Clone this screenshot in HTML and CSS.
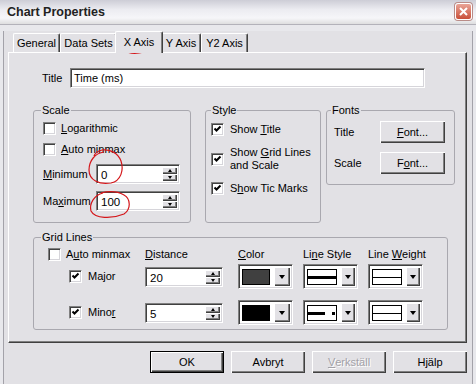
FILE: index.html
```html
<!DOCTYPE html>
<html lang="en">
<head>
  <meta charset="UTF-8">
  <meta name="viewport" content="width=device-width, initial-scale=1">
  <title>Chart Properties</title>
  <link rel="stylesheet" href="styles.css">
</head>
<body>
  <div class="window">
    <div class="titlebar">
      <span class="caption">Chart Properties</span>
      <span class="close">
        <svg width="9" height="9" viewBox="0 0 9 9"><path d="M1 1 L8 8 M8 1 L1 8" stroke="#fff" stroke-width="2"/></svg>
      </span>
    </div>
    <div class="frame">
      <div class="client">
        <div class="tabs">
          <span class="tab tab-general">General</span>
          <span class="tab tab-data">Data Sets</span>
          <span class="tab tab-x active">X Axis</span>
          <span class="tab tab-y">Y Axis</span>
          <span class="tab tab-y2">Y2 Axis</span>
        </div>

        <div class="panel">
          <div class="title-row">
            <span class="title-label">Title</span>
            <div class="field title-field">Time (ms)</div>
          </div>

          <div class="groups">
            <fieldset class="group scale">
              <legend>Scale</legend>
              <div class="check-row first"><span class="check"></span><span><u>L</u>ogarithmic</span></div>
              <div class="check-row"><span class="check"></span><span><u>A</u>uto minmax</span></div>
              <div class="spin-row">
                <span class="spin-label"><u>M</u>inimum</span>
                <div class="field spin">
                  <span class="value">0</span>
                  <span class="spinner"><span class="arrow up"></span><span class="arrow down"></span></span>
                </div>
              </div>
              <div class="spin-row second">
                <span class="spin-label">Ma<u>x</u>imum</span>
                <div class="field spin">
                  <span class="value">100</span>
                  <span class="spinner"><span class="arrow up"></span><span class="arrow down"></span></span>
                </div>
              </div>
            </fieldset>

            <fieldset class="group style">
              <legend>Style</legend>
              <div class="check-row first"><span class="check"><svg width="11" height="11" viewBox="0 0 11 11"><path d="M2.5 4.5 L4.5 6.5 L8.5 2.5" stroke="#000" stroke-width="2" fill="none"/></svg></span><span>Show <u>T</u>itle</span></div>
              <div class="check-row"><span class="check"><svg width="11" height="11" viewBox="0 0 11 11"><path d="M2.5 4.5 L4.5 6.5 L8.5 2.5" stroke="#000" stroke-width="2" fill="none"/></svg></span><span>Show <u>G</u>rid Lines<br>and Scale</span></div>
              <div class="check-row"><span class="check"><svg width="11" height="11" viewBox="0 0 11 11"><path d="M2.5 4.5 L4.5 6.5 L8.5 2.5" stroke="#000" stroke-width="2" fill="none"/></svg></span><span>S<u>h</u>ow Tic Marks</span></div>
            </fieldset>

            <fieldset class="group fonts">
              <legend>Fonts</legend>
              <div class="font-row first"><span class="font-label">Title</span><span class="btn font-btn"><u>F</u>ont...</span></div>
              <div class="font-row"><span class="font-label">Scale</span><span class="btn font-btn">F<u>o</u>nt...</span></div>
            </fieldset>
          </div>

          <fieldset class="group grid-lines">
            <legend>Grid Lines</legend>
            <div class="grid-row head">
              <div class="check-row"><span class="check"></span><span>A<u>u</u>to minmax</span></div>
              <span class="col-label"><u>D</u>istance</span>
              <span class="col-label"><u>C</u>olor</span>
              <span class="col-label">Li<u>n</u>e Style</span>
              <span class="col-label">Line <u>W</u>eight</span>
            </div>
            <div class="grid-row data-row">
              <div class="check-row indent"><span class="check"><svg width="11" height="11" viewBox="0 0 11 11"><path d="M2.5 4.5 L4.5 6.5 L8.5 2.5" stroke="#000" stroke-width="2" fill="none"/></svg></span><span>Major</span></div>
              <div class="field spin distance">
                <span class="value">20</span>
                <span class="spinner"><span class="arrow up"></span><span class="arrow down"></span></span>
              </div>
              <div class="field combo"><span class="combo-value swatch-grey"></span><span class="combo-btn"><span class="arrow down big"></span></span></div>
              <div class="field combo"><span class="combo-value"><span class="stroke thick"></span></span><span class="combo-btn"><span class="arrow down big"></span></span></div>
              <div class="field combo"><span class="combo-value"><span class="stroke thin"></span></span><span class="combo-btn"><span class="arrow down big"></span></span></div>
            </div>
            <div class="grid-row data-row minor">
              <div class="check-row indent"><span class="check"><svg width="11" height="11" viewBox="0 0 11 11"><path d="M2.5 4.5 L4.5 6.5 L8.5 2.5" stroke="#000" stroke-width="2" fill="none"/></svg></span><span>Mino<u>r</u></span></div>
              <div class="field spin distance">
                <span class="value">5</span>
                <span class="spinner"><span class="arrow up"></span><span class="arrow down"></span></span>
              </div>
              <div class="field combo"><span class="combo-value swatch-black"></span><span class="combo-btn"><span class="arrow down big"></span></span></div>
              <div class="field combo"><span class="combo-value"><svg width="28" height="3" viewBox="0 0 28 3"><rect x="0" y="0" width="17" height="3" fill="#000"/><rect x="24" y="0" width="3" height="3" fill="#000"/></svg></span><span class="combo-btn"><span class="arrow down big"></span></span></div>
              <div class="field combo"><span class="combo-value"><span class="stroke thin"></span></span><span class="combo-btn"><span class="arrow down big"></span></span></div>
            </div>
          </fieldset>
        </div>

        <div class="buttons">
          <span class="btn dialog-btn default">OK</span>
          <span class="btn dialog-btn">Avbryt</span>
          <span class="btn dialog-btn disabled"><u>V</u>erkställ</span>
          <span class="btn dialog-btn">Hjälp</span>
        </div>
      </div>
    </div>

    <!-- red pen marks drawn on top of the screenshot -->
    <svg class="marks" width="476" height="384" viewBox="0 0 476 384">
      <path d="M158 36 C146 30 127 32 121 40 C117 47 126 55 139 53 C150 51 159 46 160 39" />
      <path d="M157 39 L159 41" stroke-width="2.5"/>
      <path d="M104 152 C95 153 89 161 89 170 C89 180 99 185 111 183 C121 181 124 170 121 161 C118 153 110 149 102 150 C98 151 95 153 94 156" />
      <path d="M103 193 C94 195 89 204 91 211 C95 219 112 219 124 214 C131 209 131 199 124 195 C117 191 109 191 101 193" />
    </svg>
  </div>
</body>
</html>
```

FILE: styles.css
```css
* { margin: 0; padding: 0; box-sizing: border-box; }
body {
  font-family: "Liberation Sans", Arial, sans-serif;
  font-size: 11px;
  color: #000;
  background: #e2e1e5;
}
u { text-underline-offset: 1px; }

.window {
  position: relative;
  width: 476px;
  height: 384px;
  display: flex;
  flex-direction: column;
  background: #e8e8ec;
  overflow: hidden;
}

/* title bar */
.titlebar {
  height: 25px;
  display: flex;
  align-items: center;
  padding: 0 4px 1px 7px;
  background: linear-gradient(#cdcdd6, #ececf1 40%, #f6f6f9 75%, #dededf);
  border-bottom: 1px solid #b3b2ba;
}
.caption {
  flex: 1;
  font-weight: bold;
  font-size: 12.5px;
  color: #222;
}
.close {
  width: 17px;
  height: 17px;
  display: flex;
  align-items: center;
  justify-content: center;
  border: 1px solid #fff;
  border-radius: 3px;
  background: linear-gradient(#e9a497, #c9503a);
  box-shadow: 0 0 0 1px #b98c88;
}

/* client area */
.frame {
  flex: 1;
  padding: 0 3px 3px;
}
.client {
  height: 100%;
  background: #e2e1e5;
  border: 1px solid #a3a2a9;
  border-top: 0;
}

.tabs {
  display: flex;
  align-items: flex-end;
  height: 21px;
  margin: 6px 0 0 9px;
}
.tab {
  height: 19px;
  display: flex;
  align-items: center;
  justify-content: center;
  border-top: 1px solid #fff;
  border-left: 1px solid #fff;
  border-right: 1px solid #404040;
  border-radius: 2px 2px 0 0;
  box-shadow: inset -1px 0 #808080;
}
.tab-general { width: 47px; }
.tab-data { width: 57px; }
.tab-x { width: 44px; }
.tab-y { width: 40px; }
.tab-y2 { width: 47px; }
.tab.active {
  position: relative;
  z-index: 1;
  width: 48px;
  height: 22px;
  margin: 0 -2px -1px;
  padding-bottom: 2px;
  background: #e2e1e5;
}

.panel {
  height: 291px;
  margin: 0 5px 0 4px;
  padding-left: 24px;
  border: 1px solid;
  border-color: #fff #404040 #404040 #fff;
  box-shadow: inset -1px -1px #808080;
}

/* shared widgets */
.field {
  background: #fff;
  border: 1px solid;
  border-color: #808080 #fff #fff #808080;
  box-shadow: inset 1px 1px #404040, inset -1px -1px #d6d5da;
}
.btn, .combo-btn, .spinner .arrow {
  background: #e2e1e5;
  box-shadow: inset 1px 1px #fff, inset -1px -1px #404040, inset -2px -2px #808080;
}
.btn {
  display: flex;
  align-items: center;
  justify-content: center;
}
.check {
  width: 13px;
  height: 13px;
  flex: none;
  background: #fff;
  border: 1px solid;
  border-color: #808080 #fff #fff #808080;
  box-shadow: inset 1px 1px #404040, inset -1px -1px #d6d5da;
}
.check svg { display: block; }
.check-row {
  display: flex;
  align-items: center;
  gap: 5px;
  line-height: 13px;
  white-space: nowrap;
}

.title-row {
  display: flex;
  align-items: center;
  margin-top: 15px;
  padding-left: 9px;
}
.title-label { width: 28px; }
.title-field {
  width: 355px;
  height: 20px;
  padding: 0 3px;
  line-height: 18px;
}

/* group boxes */
.groups {
  display: flex;
  align-items: flex-start;
  margin-top: 16px;
}
.group {
  border: 1px solid #a9a8af;
  border-radius: 3px;
  min-width: 0;
}
.group legend {
  padding: 0 1px;
  margin-left: -2px;
  line-height: 13px;
}

.scale { width: 158px; height: 119px; padding: 0 9px; }
.scale .check-row { margin-top: 8px; }
.scale .check-row.first { margin-top: 5px; }
.spin-row {
  display: flex;
  align-items: center;
  margin-top: 8px;
}
.spin-row.second { margin-top: 7px; }
.spin-label { width: 53px; }
.spin {
  display: flex;
  width: 84px;
  height: 20px;
  padding: 2px;
}
.spin .value {
  flex: 1;
  padding-left: 2px;
  line-height: 16px;
  font-size: 11.5px;
}
.spinner {
  width: 15px;
  display: flex;
  flex-direction: column;
}
.arrow {
  display: flex;
  align-items: center;
  justify-content: center;
}
.spinner .arrow { flex: 1; }
.arrow::after {
  content: "";
  display: block;
  width: 0;
  height: 0;
  border-left: 2.5px solid transparent;
  border-right: 2.5px solid transparent;
}
.arrow.up::after { border-bottom: 3px solid #000; }
.arrow.down::after { border-top: 3px solid #000; }
.arrow.big::after {
  border-left-width: 3.5px;
  border-right-width: 3.5px;
  border-top-width: 4px;
}

.style { width: 116px; height: 119px; margin-left: 14px; padding: 0 5px; }
.style legend { margin-left: 0; }
.style .check-row { gap: 6px; margin-top: 10px; }
.style .check-row.first { margin-top: 6px; }

.fonts { width: 129px; height: 81px; margin-left: 5px; padding: 0 7px; }
.fonts legend { margin-left: -3px; }
.font-row {
  display: flex;
  align-items: center;
  margin-top: 9px;
}
.font-row.first { margin-top: 4px; }
.font-label { width: 46px; }
.font-btn { width: 65px; height: 22px; }

.grid-lines {
  width: 415px;
  height: 99px;
  margin-top: 8px;
  padding-left: 14px;
}
.grid-lines legend { margin-left: -7px; }
.grid-row {
  display: grid;
  grid-template-columns: 97px 93px 65px 65px 55px;
  align-items: center;
}
.grid-row.head { height: 20px; }
.col-label { white-space: nowrap; }
.data-row { height: 25px; }
.data-row.minor { margin-top: 11px; }
.check-row.indent { margin-left: 21px; gap: 6px; }
.distance { width: 78px; }

.combo {
  display: flex;
  width: 55px;
  height: 25px;
  padding: 2px;
}
.combo-value {
  flex: 1;
  margin: 2px 4px 1px 1px;
  border: 1px solid #000;
  display: flex;
  align-items: center;
  justify-content: center;
}
.swatch-grey { background: #404040; }
.swatch-black { background: #000; }
.stroke { display: block; width: 28px; background: #000; }
.stroke.thick { height: 3px; }
.stroke.thin { height: 1px; }
.combo-btn {
  width: 16px;
  display: flex;
  align-items: center;
  justify-content: center;
}

/* dialog buttons */
.buttons {
  display: flex;
  justify-content: flex-end;
  gap: 7px;
  margin-top: 8px;
  padding-right: 5px;
}
.dialog-btn { width: 74px; height: 22px; }
.dialog-btn.default { border: 1px solid #000; }
.dialog-btn.disabled {
  color: #a2a1a7;
  text-shadow: 1px 1px #fff;
}

.marks {
  position: absolute;
  top: 0;
  left: 0;
  pointer-events: none;
  fill: none;
  stroke: #d4161a;
  stroke-width: 1.2;
}
```
